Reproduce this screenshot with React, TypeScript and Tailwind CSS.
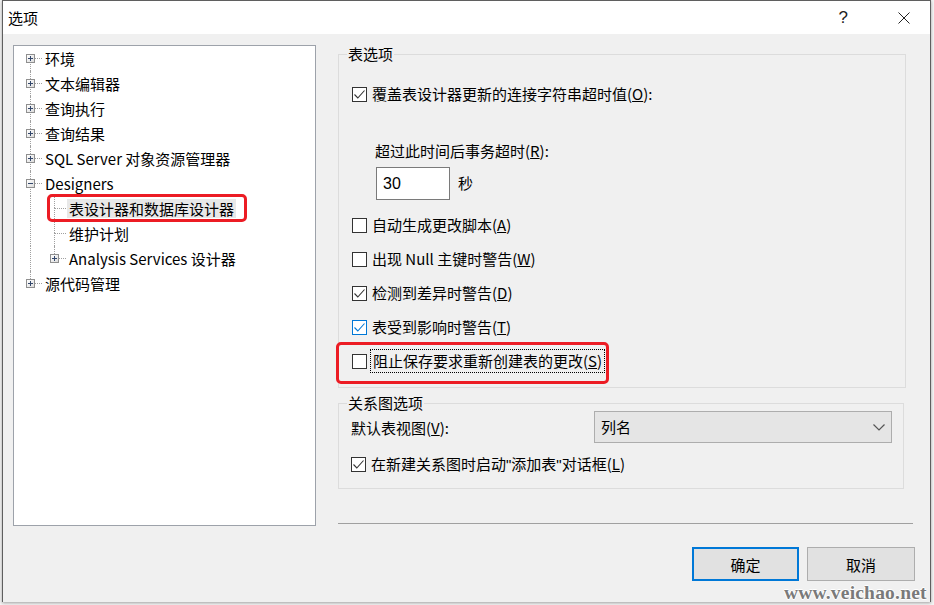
import React from "react";

type Node = {
  label: string;
  level: 0 | 1;
  box?: "plus" | "minus";
  first?: boolean;
  last?: boolean;
  lastChild?: boolean;
  selected?: boolean;
};

const tree: Node[] = [
  { label: "环境", level: 0, box: "plus", first: true },
  { label: "文本编辑器", level: 0, box: "plus" },
  { label: "查询执行", level: 0, box: "plus" },
  { label: "查询结果", level: 0, box: "plus" },
  { label: "SQL Server 对象资源管理器", level: 0, box: "plus" },
  { label: "Designers", level: 0, box: "minus" },
  { label: "表设计器和数据库设计器", level: 1, selected: true },
  { label: "维护计划", level: 1 },
  { label: "Analysis Services 设计器", level: 1, box: "plus", lastChild: true },
  { label: "源代码管理", level: 0, box: "plus", last: true },
];

export default function App() {
  return (
    <div className="relative w-[934px] h-[605px] overflow-hidden bg-[#f4f4f4] pl-[2px] font-['Noto_Sans_CJK_SC','Microsoft_YaHei',sans-serif] text-[15px] text-black">
      {/* Window */}
      <div className="w-[929px] h-[602px] flex flex-col border-l border-r border-t border-[#5f5f5f] bg-[#f0f0f0] shadow-[0_1px_3px_rgba(0,0,0,0.35)]">
        {/* Title bar */}
        <div className="h-[33px] bg-white flex items-center pl-[5px]">
          <span className="leading-[20px]">选项</span>
          <span className="ml-auto mr-[50px] font-['Liberation_Sans',sans-serif] font-light text-[17px] text-[#222]">
            ?
          </span>
          <svg width="12" height="12" viewBox="0 0 12 12" className="mr-[20px]">
            <path d="M0.5 0.5 L11.5 11.5 M11.5 0.5 L0.5 11.5" stroke="#222" strokeWidth="1" />
          </svg>
        </div>

        {/* Body */}
        <div className="flex">
          {/* Tree */}
          <div className="relative ml-[10px] mt-[11px] w-[303px] h-[481px] border border-[#9da2aa] bg-white pl-[4px]">
            {tree.map((n) => (
              <TreeRow key={n.label} node={n} />
            ))}
            {/* annotation */}
            <div className="absolute left-[33px] top-[148px] w-[200px] h-[28px] rounded-[5px] border-[3px] border-[#ec1c24]" />
          </div>

          {/* Right column */}
          <div className="ml-[22px] mt-[20px] w-[577px] flex flex-col">
            {/* 表选项 */}
            <div className="w-[568px] h-[334px] border border-[#dcdcdc] flex flex-col">
              <div className="-mt-[11px] ml-[8px] w-fit px-[1px] bg-[#f0f0f0] leading-[20px]">表选项</div>

              <div className="mt-[20px] pl-[13px]">
                <CheckRow checked>
                  覆盖表设计器更新的连接字符串超时值(<u>O</u>):
                </CheckRow>
              </div>

              <div className="mt-[37px] pl-[36px] leading-[20px]">
                超过此时间后事务超时(<u>R</u>):
              </div>

              <div className="mt-[6px] pl-[37px] flex items-center">
                <div className="w-[74px] h-[33px] border border-[#7a7a7a] bg-white flex items-center pl-[6px] font-['Liberation_Sans',sans-serif] text-[16px]">
                  30
                </div>
                <span className="ml-[8px]">秒</span>
              </div>

              <div className="mt-[15px] pl-[13px] flex flex-col gap-[14px]">
                <CheckRow>
                  自动生成更改脚本(<u>A</u>)
                </CheckRow>
                <CheckRow>
                  出现 Null 主键时警告(<u>W</u>)
                </CheckRow>
                <CheckRow checked>
                  检测到差异时警告(<u>D</u>)
                </CheckRow>
                <CheckRow checked blue>
                  表受到影响时警告(<u>T</u>)
                </CheckRow>
                <div className="relative">
                  <div className="flex items-center h-[20px]">
                    <Box />
                    <span className="ml-[3px] border border-dotted border-black px-[2px] leading-[22px]">
                      阻止保存要求重新创建表的更改(<u>S</u>)
                    </span>
                  </div>
                  {/* annotation */}
                  <div className="absolute -left-[16px] -top-[9px] w-[273px] h-[42px] rounded-[5px] border-[3px] border-[#ec1c24]" />
                </div>
              </div>
            </div>

            {/* 关系图选项 */}
            <div className="mt-[15px] w-[566px] h-[86px] border border-[#dcdcdc] flex flex-col">
              <div className="-mt-[11px] ml-[8px] w-fit px-[1px] bg-[#f0f0f0] leading-[20px]">关系图选项</div>
              <div className="-mt-[2px] pl-[12px] pr-[11px] flex items-center">
                <span className="mt-[2px] leading-[20px]">
                  默认表视图(<u>V</u>):
                </span>
                <div className="ml-auto w-[298px] h-[32px] border border-[#adadad] bg-[#e5e5e5] flex items-center pl-[6px] pr-[6px]">
                  <span>列名</span>
                  <svg width="12" height="7" viewBox="0 0 12 7" className="ml-auto">
                    <path d="M0.5 0.5 L6 6 L11.5 0.5" fill="none" stroke="#555" strokeWidth="1.2" />
                  </svg>
                </div>
              </div>
              <div className="mt-[11px] pl-[12px]">
                <CheckRow checked>
                  在新建关系图时启动<span className="font-['Liberation_Sans',sans-serif]">"</span>添加表
                  <span className="font-['Liberation_Sans',sans-serif]">"</span>对话框(<u>L</u>)
                </CheckRow>
              </div>
            </div>

            {/* separator */}
            <div className="mt-[34px] w-[575px] h-[1px] bg-[#a0a0a0]" />

            {/* buttons */}
            <div className="mt-[23px] flex justify-end gap-[8px]">
              <button className="w-[107px] h-[34px] border-2 border-[#0078d7] bg-[#e1e1e1] leading-none">
                确定
              </button>
              <button className="w-[108px] h-[34px] border border-[#adadad] bg-[#e1e1e1] leading-none">
                取消
              </button>
            </div>
          </div>
        </div>
      </div>

      {/* watermark */}
      <div className="absolute left-[784px] top-[582px] leading-[22px] font-['Liberation_Serif',serif] font-bold text-[19.5px] tracking-[0.2px] text-[#7a7a7a] [text-shadow:1px_0_0_#fff,-1px_0_0_#fff,0_1px_0_#fff,0_-1px_0_#fff]">
        www.veichao.net
      </div>
    </div>
  );
}

function TreeRow({ node }: { node: Node }) {
  const dot = "border-[#a0a0a0] border-dotted";
  return (
    <div className="flex h-[25px] items-center">
      {/* level 0 connector cell */}
      <div className="relative w-[24px] h-full shrink-0">
        {node.level === 0 ? (
          <>
            {!node.first && <div className={`absolute left-[12px] top-0 h-[12px] border-l ${dot}`} />}
            {!node.last && <div className={`absolute left-[12px] top-[12px] h-[13px] border-l ${dot}`} />}
            <div className={`absolute left-[12px] top-[12px] w-[12px] border-t ${dot}`} />
            {node.box && <ExpandBox kind={node.box} />}
          </>
        ) : (
          <div className={`absolute left-[12px] top-0 h-full border-l ${dot}`} />
        )}
      </div>
      {node.level === 1 && (
        <div className="relative w-[24px] h-full shrink-0">
          <div className={`absolute left-[12px] top-0 h-[12px] border-l ${dot}`} />
          {!node.lastChild && <div className={`absolute left-[12px] top-[12px] h-[13px] border-l ${dot}`} />}
          <div className={`absolute left-[12px] top-[12px] w-[12px] border-t ${dot}`} />
          {node.box && <ExpandBox kind={node.box} />}
        </div>
      )}
      {node.selected ? (
        <span className="ml-[1px] px-[2px] bg-[#e8e8e8] leading-[19px] whitespace-nowrap">{node.label}</span>
      ) : (
        <span className="ml-[3px] leading-[20px] whitespace-nowrap">{node.label}</span>
      )}
    </div>
  );
}

function ExpandBox({ kind }: { kind: "plus" | "minus" }) {
  return (
    <div className="absolute left-[8px] top-[8px] w-[9px] h-[9px] border border-[#8f8f8f] bg-gradient-to-br from-white to-[#dcdcdc] flex items-center justify-center">
      <svg width="5" height="5" viewBox="0 0 5 5">
        <rect x="0" y="2" width="5" height="1" fill="#33476b" />
        {kind === "plus" && <rect x="2" y="0" width="1" height="5" fill="#33476b" />}
      </svg>
    </div>
  );
}

function Box({ checked, blue }: { checked?: boolean; blue?: boolean }) {
  const c = blue ? "#0078d7" : "#333333";
  return (
    <div
      className={`w-[15px] h-[15px] shrink-0 bg-white border flex items-center justify-center ${
        blue ? "border-[#0078d7]" : "border-[#333333]"
      }`}
    >
      {checked && (
        <svg width="13" height="13" viewBox="0 0 13 13">
          <path d="M1.5 6.5 L4.8 10 L11.5 2.5" fill="none" stroke={c} strokeWidth="1.1" />
        </svg>
      )}
    </div>
  );
}

function CheckRow({
  checked,
  blue,
  children,
}: {
  checked?: boolean;
  blue?: boolean;
  children: React.ReactNode;
}) {
  return (
    <div className="flex items-center h-[20px]">
      <Box checked={checked} blue={blue} />
      <span className="ml-[5px] leading-[20px] whitespace-nowrap">{children}</span>
    </div>
  );
}
